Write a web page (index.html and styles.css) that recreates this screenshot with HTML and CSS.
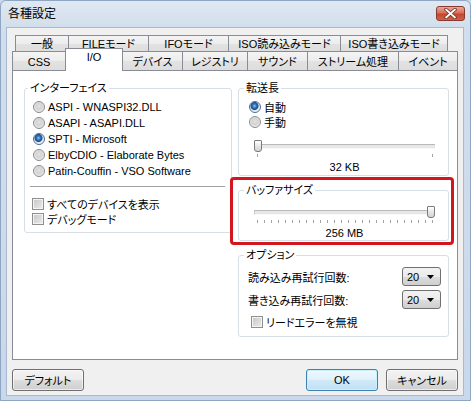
FILE: index.html
```html
<!DOCTYPE html>
<html lang="ja">
<head>
<meta charset="utf-8">
<title>各種設定</title>
<link rel="stylesheet" href="styles.css">
</head>
<body>
<div class="window">
  <div class="titlebar">
    <span class="title">各種設定</span>
    <span class="close">
      <svg width="13" height="11" viewBox="0 0 13 11">
        <path d="M2 1.5L11 9.5M11 1.5L2 9.5" stroke="#6e2a20" stroke-width="3.4" stroke-linecap="round"/>
        <path d="M2 1.5L11 9.5M11 1.5L2 9.5" stroke="#fff" stroke-width="1.8" stroke-linecap="round"/>
      </svg>
    </span>
  </div>
  <div class="client">
    <div class="tabs">
      <div class="tabrow row1">
        <div class="tab t-ippan">一般</div>
        <div class="tab t-file">FILEモード</div>
        <div class="tab t-ifo">IFOモード</div>
        <div class="tab t-isor">ISO読み込みモード</div>
        <div class="tab t-isow">ISO書き込みモード</div>
      </div>
      <div class="tabrow row2">
        <div class="tab t-css">CSS</div>
        <div class="tab t-io selected">I/O</div>
        <div class="tab t-dev">デバイス</div>
        <div class="tab t-reg">レジストリ</div>
        <div class="tab t-snd">サウンド</div>
        <div class="tab t-str">ストリーム処理</div>
        <div class="tab t-evt">イベント</div>
      </div>
    </div>
    <div class="panel">
      <div class="col-left">
        <fieldset class="group g-if">
          <legend>インターフェイス</legend>
          <div class="opt"><span class="radio"></span>ASPI - WNASPI32.DLL</div>
          <div class="opt"><span class="radio"></span>ASAPI - ASAPI.DLL</div>
          <div class="opt"><span class="radio on"></span>SPTI - Microsoft</div>
          <div class="opt"><span class="radio"></span>ElbyCDIO - Elaborate Bytes</div>
          <div class="opt"><span class="radio"></span>Patin-Couffin - VSO Software</div>
          <div class="sep"></div>
          <div class="chk"><span class="check"></span>すべてのデバイスを表示</div>
          <div class="chk"><span class="check"></span>デバッグモード</div>
        </fieldset>
      </div>
      <div class="col-right">
        <fieldset class="group g-xfer">
          <legend>転送長</legend>
          <div class="opt2"><span class="radio on"></span>自動</div>
          <div class="opt2"><span class="radio"></span>手動</div>
          <div class="slider">
            <div class="track"></div>
            <div class="thumb at-start"></div>
          </div>
          <div class="ticks">
            <span></span><span></span>
          </div>
          <div class="value">32 KB</div>
        </fieldset>
        <div class="highlight">
          <fieldset class="group g-buf">
            <legend>バッファサイズ</legend>
            <div class="slider">
              <div class="track"></div>
              <div class="thumb at-end"></div>
            </div>
            <div class="ticks">
              <span></span><span></span><span></span><span></span><span></span><span></span><span></span><span></span><span></span><span></span><span></span><span></span><span></span><span></span><span></span><span></span><span></span><span></span><span></span><span></span><span></span><span></span><span></span><span></span><span></span><span></span>
            </div>
            <div class="value">256 MB</div>
          </fieldset>
        </div>
        <fieldset class="group g-opt">
          <legend>オプション</legend>
          <div class="orow">
            <span class="olabel">読み込み再試行回数:</span>
            <span class="combo"><span>20</span><svg width="7" height="4" viewBox="0 0 7 4"><path d="M0 0H7L3.5 4Z" fill="#000"/></svg></span>
          </div>
          <div class="orow">
            <span class="olabel">書き込み再試行回数:</span>
            <span class="combo"><span>20</span><svg width="7" height="4" viewBox="0 0 7 4"><path d="M0 0H7L3.5 4Z" fill="#000"/></svg></span>
          </div>
          <div class="chk ochk"><span class="check"></span>リードエラーを無視</div>
        </fieldset>
      </div>
    </div>
    <div class="buttons">
      <div class="btn">デフォルト</div>
      <div class="btn default">OK</div>
      <div class="btn">キャンセル</div>
    </div>
  </div>
</div>
</body>
</html>
```

FILE: styles.css
```css
* { box-sizing: border-box; }
html, body { margin: 0; padding: 0; }
body {
  width: 471px;
  height: 401px;
  overflow: hidden;
  background: #c8d7e9;
  font-family: "Liberation Sans", "Noto Sans CJK JP", sans-serif;
  font-size: 11px;
  font-feature-settings: "palt" 1;
  color: #000;
}
.window {
  width: 471px;
  height: 401px;
  display: flex;
  flex-direction: column;
  border: 1px solid #8fa6c3;
  border-radius: 6px 6px 0 0;
  background: linear-gradient(#dfe8f2, #d2deec 28px, #c9d8ea);
}
.titlebar {
  height: 27px;
  display: flex;
  align-items: center;
  padding: 0 5px 2px 7px;
}
.title { font-size: 12px; line-height: 14px; }
.close {
  margin-left: auto;
  align-self: flex-start;
  margin-top: 5px;
  width: 29px;
  height: 15px;
  border: 1px solid #8a3a2c;
  border-radius: 3px;
  background: linear-gradient(#e9a898, #d8705b 45%, #c4472f 55%, #d0624a);
  display: flex;
  align-items: center;
  justify-content: center;
}
.client {
  flex: 1;
  margin: 0 7px 5px 6px;
  background: #f0f0f0;
  box-shadow: 0 0 0 1px #a7bad1;
  padding: 7px 0 0 5px;
}
.tabs { height: 35px; }
.tabrow { display: flex; align-items: flex-start; }
.row1 { margin-left: 3px; height: 17px; }
.row2 { margin-top: -1px; height: 19px; }
.tab {
  height: 17px;
  border: 1px solid #898c95;
  border-bottom: none;
  margin-left: -1px;
  background: linear-gradient(#f4f4f4, #ececec 50%, #e2e2e2 51%, #dddddd);
  display: flex;
  align-items: center;
  justify-content: center;
  line-height: 13px;
  white-space: nowrap;
}
.tabrow .tab:first-child { margin-left: 0; }
.row2 .tab { height: 19px; padding-top: 2px; }
.tab.selected {
  position: relative;
  z-index: 2;
  background: #fff;
  height: 23px;
  margin-top: -3px;
  padding-top: 0;
  padding-bottom: 5px;
}
.t-ippan { width: 54px; }
.t-file { width: 81px; }
.t-ifo { width: 81px; }
.t-isor { width: 113px; }
.t-isow { width: 108px; }
.t-css { width: 54px; }
.t-io { width: 58px; }
.t-dev { width: 61px; }
.t-reg { width: 66px; }
.t-snd { width: 61px; }
.t-str { width: 92px; }
.t-evt { width: 60px; }

.panel {
  width: 446px;
  height: 290px;
  background: #fff;
  border: 1px solid #898c95;
  padding: 11px 10px 0 11px;
  display: grid;
  grid-template-columns: 208px 211px;
  column-gap: 6px;
  align-items: start;
}
.group {
  margin: 0;
  min-width: 0;
  border: 1px solid #d5dfe5;
  border-radius: 3px;
  padding: 4px 8px 6px 8px;
}
.group legend {
  padding: 0 2px;
  margin-left: -5px;
  line-height: 13px;
  height: 13px;
}
.opt, .chk, .opt2 {
  display: flex;
  align-items: center;
  white-space: nowrap;
}
.opt { height: 16px; }
.opt2 { height: 15px; }
.chk { height: 15px; margin-left: -1px; }
.radio {
  width: 12px;
  height: 12px;
  flex: none;
  border-radius: 50%;
  border: 1px solid #8b8b8b;
  background: radial-gradient(circle at 50% 45%, #e4e4e4 0, #d2d2d2 3px, #e9e9e9 5px, #f6f6f6 6px);
  margin-right: 3px;
}
.radio.on {
  border-color: #4d6f93;
  background: radial-gradient(circle at 45% 40%, #8cc4f0 0, #2f73bd 2px, #1c4f8c 3.6px, #dfe6ee 4.4px, #f2f4f6 6px);
}
.check {
  width: 12px;
  height: 12px;
  flex: none;
  border: 1px solid #8f8f8f;
  background: linear-gradient(135deg, #c6c6c6, #ececec);
  box-shadow: inset 0 0 0 1px #f4f4f4;
  margin-right: 3px;
}
.sep {
  height: 2px;
  border-top: 1px solid #a0a0a0;
  border-bottom: 1px solid #fff;
  margin: 7px -2px 8px -3px;
}

.col-right { display: flex; flex-direction: column; }
.g-xfer { padding: 4px 13px 1px 10px; }
.g-buf { padding: 8px 13px 0 10px; }
.g-opt { margin-top: 4px; padding: 3px 7px 7px 10px; }
.g-xfer .slider { margin-top: 10px; }

.slider {
  position: relative;
  height: 14px;
  margin-left: 5px;
  display: flex;
  align-items: center;
}
.track {
  width: 100%;
  height: 5px;
  background: #e7e7e7;
  border-top: 1px solid #b9b9b9;
  border-left: 1px solid #c9c9c9;
  border-bottom: 1px solid #f8f8f8;
}
.thumb {
  position: absolute;
  top: 1px;
  width: 8px;
  height: 12px;
  border: 1px solid #7b7b7b;
  border-radius: 1px 1px 3px 3px;
  background: linear-gradient(#ffffff, #e6e6e6 50%, #d2d2d2);
}
.thumb.at-start { left: 0; }
.thumb.at-end { right: 0; }
.ticks {
  margin: 1px 2px 0 8px;
  height: 4px;
  display: flex;
  justify-content: space-between;
}
.ticks span {
  width: 1px;
  height: 3px;
  background: #a3a3a3;
}
.value {
  margin-top: 3px;
  margin-left: 5px;
  text-align: center;
  line-height: 13px;
  height: 13px;
}
.highlight {
  margin: 1px -5px 0 -8px;
  border: 3px solid #d3161e;
  border-radius: 4px;
  padding: 4px 2px 1px 5px;
}
.orow {
  height: 23px;
  display: flex;
  align-items: center;
  justify-content: space-between;
}
.olabel { margin-left: -1px; }
.combo {
  width: 39px;
  height: 19px;
  border: 1px solid #707070;
  border-radius: 3px;
  background: linear-gradient(#f2f2f2, #ebebeb 50%, #dddddd 51%, #cfcfcf);
  display: flex;
  align-items: center;
  justify-content: space-between;
  padding: 0 6px 0 4px;
}
.ochk { margin-top: 3px; margin-left: 2px; }

.buttons {
  width: 446px;
  margin-top: 9px;
  display: flex;
  gap: 8px;
}
.btn {
  width: 72px;
  height: 22px;
  border: 1px solid #707070;
  border-radius: 3px;
  background: linear-gradient(#f2f2f2, #ebebeb 50%, #dddddd 51%, #cfcfcf);
  box-shadow: inset 0 0 0 1px rgba(255,255,255,0.6);
  display: flex;
  align-items: center;
  justify-content: center;
}
.btn.default {
  margin-left: auto;
  border-color: #3c7fb1;
  background: linear-gradient(#eef7fd, #e0f1fb 50%, #cfe9f8 51%, #c2e1f4);
  box-shadow: inset 0 0 0 1px #c9f2ff;
}
```
